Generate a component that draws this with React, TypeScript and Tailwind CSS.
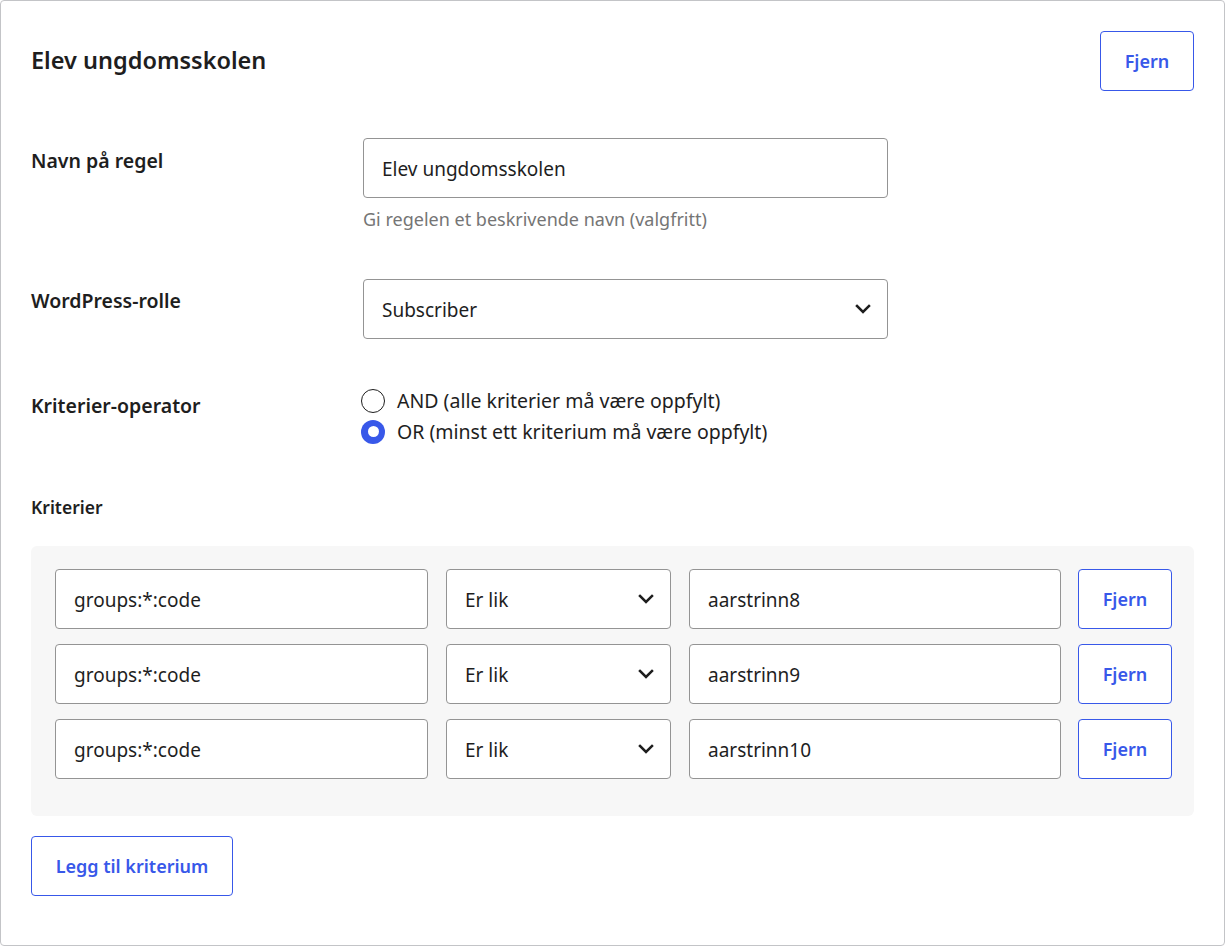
import React from "react";

const font = { fontFamily: '"Noto Sans", "Open Sans", Arial, sans-serif' };

function Chevron() {
  return (
    <svg width="16" height="10" viewBox="0 0 16 10" fill="none" className="shrink-0">
      <path d="M2 2l6 6 6-6" stroke="#1e1e1e" strokeWidth="2.5" strokeLinecap="square" />
    </svg>
  );
}

function OutlineButton({ label, className = "" }: { label: string; className?: string }) {
  return (
    <button
      type="button"
      className={`h-[60px] shrink-0 rounded-[4px] border border-[#3858e9] bg-white text-[18px] font-semibold text-[#3858e9] ${className}`}
    >
      {label}
    </button>
  );
}

function TextBox({ value, className = "" }: { value: string; className?: string }) {
  return (
    <div
      className={`flex h-[60px] shrink-0 items-center rounded-[4px] border border-[#949494] bg-white pl-[18px] pt-[2px] text-[19px] text-[#1e1e1e] ${className}`}
    >
      {value}
    </div>
  );
}

function SelectBox({ value, className = "" }: { value: string; className?: string }) {
  return (
    <div
      className={`flex h-[60px] shrink-0 items-center justify-between rounded-[4px] border border-[#949494] bg-white pl-[18px] pr-[16px] text-[19px] text-[#1e1e1e] ${className}`}
    >
      <span className="pt-[2px]">{value}</span>
      <Chevron />
    </div>
  );
}

function Radio({ checked, label }: { checked: boolean; label: string }) {
  return (
    <label className="flex h-[31px] items-center gap-[12px] text-[19.5px] text-[#1e1e1e]">
      {checked ? (
        <span className="flex h-[24px] w-[24px] items-center justify-center rounded-full bg-[#3858e9]">
          <span className="h-[11px] w-[11px] rounded-full bg-white" />
        </span>
      ) : (
        <span className="h-[24px] w-[24px] rounded-full border border-[#1e1e1e] bg-white" />
      )}
      <span>{label}</span>
    </label>
  );
}

const criteria = ["aarstrinn8", "aarstrinn9", "aarstrinn10"];

const labelCls = "text-[19.5px] font-semibold leading-[27px] text-[#1e1e1e]";

export default function App() {
  return (
    <div className="h-[946px] w-[1225px] bg-white" style={font}>
      <div className="flex h-full flex-col rounded-[4px] border border-[#c3c4c7] bg-white px-[30px] pt-[30px]">
        {/* header */}
        <div className="flex h-[60px] items-center justify-between">
          <h2 className="text-[23.5px] font-semibold text-[#1e1e1e]">Elev ungdomsskolen</h2>
          <OutlineButton label="Fjern" className="w-[94px]" />
        </div>

        {/* rule name */}
        <div className="mt-[47px] grid grid-cols-[332px_525px]">
          <div className={`pt-[9px] ${labelCls}`}>Navn på regel</div>
          <div>
            <TextBox value="Elev ungdomsskolen" />
            <p className="mt-[9px] text-[18px] leading-[24px] text-[#757575]">
              Gi regelen et beskrivende navn (valgfritt)
            </p>
          </div>
        </div>

        {/* role */}
        <div className="mt-[48px] grid grid-cols-[332px_525px]">
          <div className={`pt-[8px] ${labelCls}`}>WordPress-rolle</div>
          <SelectBox value="Subscriber" />
        </div>

        {/* operator */}
        <div className="mt-[46px] grid grid-cols-[330px_1fr]">
          <div className={`pt-[7px] ${labelCls}`}>Kriterier-operator</div>
          <div className="flex flex-col">
            <Radio checked={false} label="AND (alle kriterier må være oppfylt)" />
            <Radio checked label="OR (minst ett kriterium må være oppfylt)" />
          </div>
        </div>

        {/* criteria */}
        <div className="mt-[48px] text-[17.5px] font-semibold leading-[24px] text-[#1e1e1e]">Kriterier</div>
        <div className="mt-[27px] flex flex-col gap-[15px] rounded-[6px] bg-[#f7f7f7] px-[24px] pb-[37px] pt-[23px]">
          {criteria.map((c) => (
            <div key={c} className="flex">
              <TextBox value="groups:*:code" className="w-[373px]" />
              <SelectBox value="Er lik" className="ml-[18px] w-[225px]" />
              <TextBox value={c} className="ml-[18px] w-[372px]" />
              <OutlineButton label="Fjern" className="ml-[17px] w-[94px]" />
            </div>
          ))}
        </div>

        <div className="mt-[20px]">
          <OutlineButton label="Legg til kriterium" className="w-[202px]" />
        </div>
      </div>
    </div>
  );
}
